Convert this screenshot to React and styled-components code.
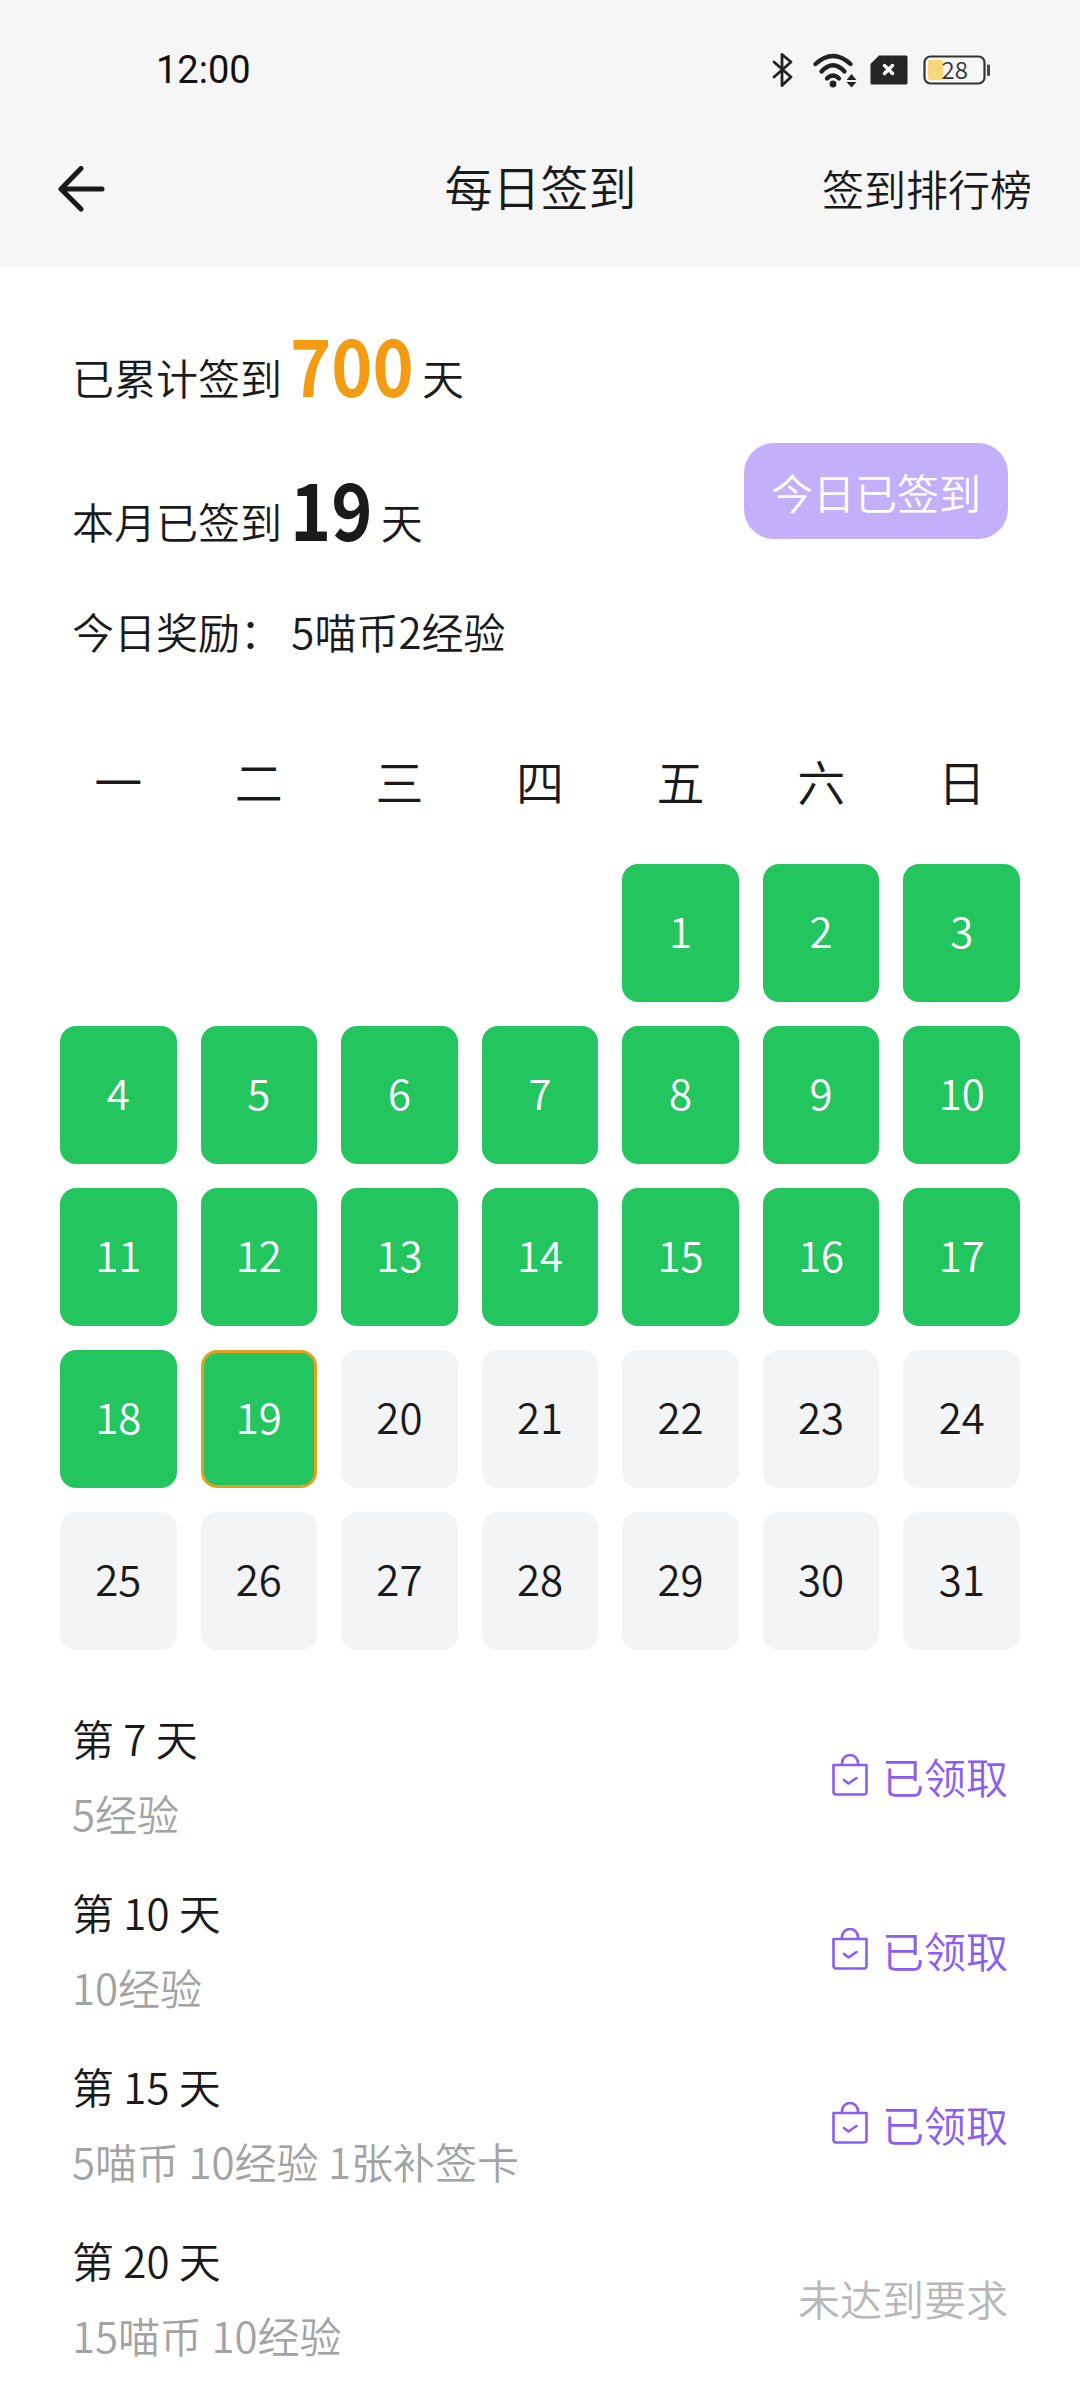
import React from 'react';
import styled, { createGlobalStyle } from 'styled-components';

const Global = createGlobalStyle`
  html, body { margin: 0; padding: 0; background: #fff; }
  body { font-family: "Noto Sans CJK SC", "Noto Sans", sans-serif; font-weight: 350; color: #1a1a1a; }
  * { box-sizing: border-box; }
`;

const Page = styled.div`
  width: 1080px;
  height: 2400px;
  overflow: hidden;
  background: #fff;
`;

const Top = styled.header`
  background: #f6f6f6;
  height: 267px;
`;

const StatusBar = styled.div`
  height: 140px;
  padding: 48px 90px 0 156px;
  display: flex;
  justify-content: space-between;
  align-items: flex-start;
`;

const Time = styled.span`
  font-family: Roboto, sans-serif;
  font-size: 38px;
  line-height: 44px;
  font-weight: 400;
  color: #111;
`;

const StatusIcons = styled.div`
  display: flex;
  align-items: center;
  height: 44px;
`;

const StatusSvg = styled.svg`
  display: block;
  flex: none;
  overflow: visible;
  margin-left: ${({ $left }) => $left || 0}px;
`;

const BatteryText = styled.text`
  font-family: "Noto Sans CJK SC", sans-serif;
  font-size: 24px;
`;

const NavBar = styled.nav`
  height: 96px;
  padding: 0 48px 0 49px;
  display: grid;
  grid-template-columns: 1fr auto 1fr;
  align-items: center;
`;

const BackButton = styled.span`
  display: flex;
  padding: 3px 0 0 8px;
`;

const Title = styled.h1`
  margin: 0 0 6px;
  font-size: 48px;
  font-weight: 350;
  line-height: 72px;
`;

const NavAction = styled.span`
  justify-self: end;
  font-size: 42px;
  line-height: 60px;
`;

const Summary = styled.section`
  padding: 38px 72px 0;
  display: flex;
  justify-content: space-between;
  align-items: flex-start;
`;

const SummaryText = styled.div`
  display: flex;
  flex-direction: column;
`;

const Line = styled.div`
  font-size: 42px;
  height: ${({ $h }) => $h}px;
  line-height: ${({ $h }) => $h}px;
  white-space: nowrap;
`;

const Big = styled.span`
  display: inline-block;
  font-size: 70px;
  font-weight: 700;
  line-height: 70px;
  margin: 0 8px;
  color: ${({ $color }) => $color};
  vertical-align: -2px;
  transform: scaleY(1.12);
  transform-origin: 50% 94%;
`;

const DoneButton = styled.button`
  width: 264px;
  height: 96px;
  border: 0;
  border-radius: 30px;
  background: #c4b0fa;
  color: #fff;
  font: 350 42px "Noto Sans CJK SC", sans-serif;
  margin-top: 138px;
  padding: 0;
`;

const Calendar = styled.section`
  padding: 68px 60px 0;
`;

const Weekdays = styled.div`
  display: grid;
  grid-template-columns: repeat(7, 1fr);
  column-gap: 24px;
  height: 86px;
  margin-bottom: 41px;
  align-items: center;
  font-size: 48px;
  text-align: center;
`;

const Days = styled.div`
  display: grid;
  grid-template-columns: repeat(7, 1fr);
  gap: 24px;
`;

const Day = styled.div`
  height: 138px;
  padding-bottom: 8px;
  border-radius: 16px;
  display: flex;
  align-items: center;
  justify-content: center;
  font-size: 42px;
  grid-column-start: ${({ $start }) => $start || 'auto'};
  background: ${({ $done }) => ($done ? '#22c55e' : '#f3f4f6')};
  color: ${({ $done }) => ($done ? '#fff' : '#1a1a1a')};
  border: ${({ $today }) => ($today ? '3px solid #e5a11d' : '0')};
`;

const Rewards = styled.ul`
  list-style: none;
  margin: 0;
  padding: 38px 72px 0;
`;

const Reward = styled.li`
  height: 174px;
  display: flex;
  justify-content: space-between;
  align-items: center;
`;

const RewardInfo = styled.div`
  display: flex;
  flex-direction: column;
`;

const RewardDay = styled.span`
  font-size: 42px;
  line-height: 75px;
`;

const RewardDesc = styled.span`
  font-size: 42px;
  line-height: 75px;
  color: #a3a3a3;
`;

const Status = styled.span`
  display: flex;
  align-items: center;
  gap: 14px;
  font-size: 42px;
  color: ${({ $claimed }) => ($claimed ? '#8b5cf6' : '#b8b8b8')};
`;

const BagIcon = () => (
  <svg width="36" height="42" viewBox="0 0 36 42" fill="none" stroke="#8b5cf6" strokeWidth="2.6" strokeLinecap="round" strokeLinejoin="round">
    <path d="M1.500 11h33v27a2.500 2.500 0 0 1-2.500 2.500H4A2.500 2.500 0 0 1 1.500 38z" />
    <path d="M10 11V9a8 8 0 0 1 16 0v2" />
    <path d="M12 26l4.500 3.500 8-5.500" />
  </svg>
);

const Bluetooth = () => (
  <StatusSvg width="21" height="34" viewBox="0 0 21 34" fill="none" stroke="#222" strokeWidth="2.8" strokeLinejoin="round" strokeLinecap="round">
    <path d="M2 9l17 15-9 8.500V1.500L19 9 2 24" />
  </StatusSvg>
);

const Wifi = () => (
  <StatusSvg $left={20} width="44" height="35" viewBox="0 0 44 35">
    <g fill="none" stroke="#222" strokeWidth="4.4" strokeLinecap="round">
      <path d="M2.500 11Q20-5 37.500 11" />
      <path d="M8.500 18.500Q20 6 31.500 18.500" />
      <path d="M14 25.500Q20 19.500 26 25.500" />
    </g>
    <circle cx="20" cy="31" r="3.400" fill="#222" />
    <path d="M33.500 27l5-6 5 6zM33.500 29h10l-5 5.500z" fill="#222" />
  </StatusSvg>
);

const SimOff = () => (
  <StatusSvg $left={13} width="38" height="30" viewBox="0 0 38 30">
    <path d="M9 .500h27a1.500 1.500 0 0 1 1.500 1.500v26a1.500 1.500 0 0 1-1.500 1.500H2A1.500 1.500 0 0 1 .500 28V9z" fill="#262626" />
    <path d="M14.500 10.500l8 8M22.500 10.500l-8 8" stroke="#fff" strokeWidth="3.400" strokeLinecap="round" />
  </StatusSvg>
);

const Battery = () => (
  <StatusSvg $left={15} width="67" height="30" viewBox="0 0 67 30">
    <rect x="1.500" y="1.500" width="60" height="27" rx="6" fill="none" stroke="#333" strokeWidth="2.200" />
    <rect x="5" y="5" width="15" height="20" rx="2" fill="#f8d67a" />
    <rect x="64" y="9.500" width="3" height="11.500" rx="1" fill="#444" />
    <BatteryText x="18.500" y="24" fill="#333">28</BatteryText>
  </StatusSvg>
);

const ArrowLeft = () => (
  <svg width="48" height="48" viewBox="0 0 48 48" fill="none" stroke="#1a1a1a" strokeWidth="5" strokeLinecap="round" strokeLinejoin="round">
    <path d="M24 2.500L4 23l20 20" />
    <path d="M4.500 23H45" />
  </svg>
);

const weekdays = ['一', '二', '三', '四', '五', '六', '日'];
const days = Array.from({ length: 31 }, (_, i) => i + 1);

const rewards = [
  { day: '第 7 天', desc: '5经验', claimed: true },
  { day: '第 10 天', desc: '10经验', claimed: true },
  { day: '第 15 天', desc: '5喵币 10经验 1张补签卡', claimed: true },
  { day: '第 20 天', desc: '15喵币 10经验', claimed: false },
];

export default function App() {
  return (
    <Page>
      <Global />
      <Top>
        <StatusBar>
          <Time>12:00</Time>
          <StatusIcons>
            <Bluetooth />
            <Wifi />
            <SimOff />
            <Battery />
          </StatusIcons>
        </StatusBar>
        <NavBar>
          <BackButton><ArrowLeft /></BackButton>
          <Title>每日签到</Title>
          <NavAction>签到排行榜</NavAction>
        </NavBar>
      </Top>

      <Summary>
        <SummaryText>
          <Line $h={144}>已累计签到<Big $color="#f39c12">700</Big>天</Line>
          <Line $h={144}>本月已签到<Big $color="#1a1a1a">19</Big>天</Line>
          <Line $h={76}>今日奖励：&nbsp;5喵币2经验</Line>
        </SummaryText>
        <DoneButton>今日已签到</DoneButton>
      </Summary>

      <Calendar>
        <Weekdays>
          {weekdays.map((w) => <span key={w}>{w}</span>)}
        </Weekdays>
        <Days>
          {days.map((d) => (
            <Day key={d} $start={d === 1 ? 5 : undefined} $done={d <= 19} $today={d === 19}>{d}</Day>
          ))}
        </Days>
      </Calendar>

      <Rewards>
        {rewards.map((r) => (
          <Reward key={r.day}>
            <RewardInfo>
              <RewardDay>{r.day}</RewardDay>
              <RewardDesc>{r.desc}</RewardDesc>
            </RewardInfo>
            <Status $claimed={r.claimed}>
              {r.claimed && <BagIcon />}
              {r.claimed ? '已领取' : '未达到要求'}
            </Status>
          </Reward>
        ))}
      </Rewards>
    </Page>
  );
}
